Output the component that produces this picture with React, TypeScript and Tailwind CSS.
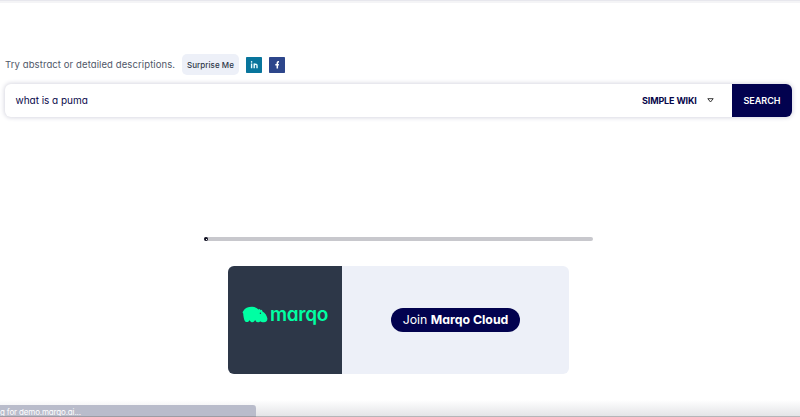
import React from "react";

function PromptRow() {
  return (
    <div className="flex h-[21px] items-center pl-[5px]">
      <p className="w-[177px] whitespace-nowrap text-[9.5px] leading-none tracking-[0.1px] text-[#505868]">
        Try abstract or detailed descriptions.
      </p>
      <button className="h-[21px] w-[57px] whitespace-nowrap rounded-[5px] bg-[#edf0f8] text-[8px] font-medium leading-none tracking-[0.04px] text-[#2d3748]">
        Surprise Me
      </button>
      <svg className="ml-[7px]" width="16" height="16" viewBox="0 0 16 16" aria-label="LinkedIn">
        <rect width="16" height="16" rx=".7" fill="#08759c" />
        <path d="M5.6 6.6V11.3M8.2 11.3V6.6M8.2 8.8C8.2 6.7 11 6.6 11 8.8V11.3" fill="none" stroke="#e8fbff" strokeWidth="1.4" />
        <circle cx="5.6" cy="4.9" r=".8" fill="#e8fbff" />
      </svg>
      <svg className="ml-[6.5px]" width="16" height="16" viewBox="0 0 16 16" aria-label="Facebook">
        <rect width="16" height="16" rx=".7" fill="#2d468b" />
        <path d="M10 4.8H9.4Q8.3 4.8 8.3 6V11.6M6.3 7.7H9.9" fill="none" stroke="white" strokeWidth="1.5" />
      </svg>
    </div>
  );
}

function SearchBar() {
  return (
    <div className="ml-[5px] mt-[9px] flex h-[33px] w-[787px] items-center overflow-hidden rounded-[6px] bg-white shadow-[0_0_4px_1px_#d9d9e2]">
      <span className="mb-[2px] flex-1 whitespace-nowrap pl-[10.5px] text-[10px] leading-none tracking-[-0.03px] text-[#07074a]">what is a puma</span>
      <span className="w-[65px] whitespace-nowrap text-[9px] font-bold leading-none tracking-[-0.13px] text-[#07074a]">SIMPLE WIKI</span>
      <svg className="mr-[18px]" width="7" height="5" viewBox="0 0 7 5">
        <path d="M.8.7H6.2L3.5 4Z" fill="white" stroke="#222" strokeWidth=".9" />
      </svg>
      <button className="h-full w-[60px] bg-[#02024f] text-[9px] font-semibold leading-none text-white">SEARCH</button>
    </div>
  );
}

function MarqoLogo() {
  return (
    <div className="flex h-[20px] items-center">
      <svg width="26" height="17" viewBox="0 0 26 17">
        <path
          d="M.5 6.3L1.3 5.1C3 2 6.2.7 10.2.8c3 0 4.6 1.2 6.4 2.8l1.3-.7.7 1.4 1.3-.5.6 1.6c2.5 1.4 4.7 4.5 4.9 7.2.1 2.2-1.1 3.6-3.4 3.7-1.7.1-2.8-.4-3.8-1.1-.8 1.2-3.4 1.3-4.2.2l-.8-1.3-1.1 1.5c-.9 1-3.1.9-3.7-.3l-.8-1.1-1 1.2c-1.1 1-3.2.8-3.8-.5C1.7 13 1.4 10 1.2 7.6Z"
          fill="#00ffa3"
        />
        <circle cx="18.4" cy="7.3" r=".7" fill="#2d3748" />
      </svg>
      <span className="ml-[2px] text-[19px] font-semibold leading-none tracking-[-0.3px] text-[#00ffa3]">marqo</span>
    </div>
  );
}

export default function App() {
  return (
    <main className="flex h-[417px] w-[800px] flex-col overflow-hidden bg-white font-['Inter','Liberation_Sans',sans-serif] [font-feature-settings:'cv11']">
      <div className="h-[3px] shrink-0 border-b-2 border-[#f4f4f6] bg-[#e7e7ed]" />
      <div className="mt-[51px]">
        <PromptRow />
        <SearchBar />
      </div>
      <div className="ml-[204px] mt-[120px] h-[4px] w-[389px] shrink-0 rounded-full bg-[#c8c8cd]">
        <div className="flex h-[4px] w-[4px] items-center justify-center rounded-full bg-[#111122]">
          <div className="h-px w-px bg-white" />
        </div>
      </div>
      <section className="ml-[228px] mt-[25px] flex h-[108px] w-[341px] shrink-0 overflow-hidden rounded-[6px] bg-[#edf0f8]">
        <div className="flex w-[114px] justify-center bg-[#2d3748] pt-[38px]">
          <MarqoLogo />
        </div>
        <div className="flex flex-1 items-center pl-[49px]">
          <button className="h-[24px] w-[129px] whitespace-nowrap rounded-full bg-[#02024f] text-[12.3px] leading-none text-white">
            Join <strong className="font-bold">Marqo Cloud</strong>
          </button>
        </div>
      </section>
      <footer className="mt-auto flex h-[17px] w-full items-end bg-linear-to-b from-white to-[#e2e3e6]">
        <div className="h-[12px] w-[256px] overflow-hidden whitespace-nowrap rounded-tr-[3px] border-b border-[#9c9ca4] bg-[#b9bccb] pt-[3px] text-[8px] leading-[9px] tracking-[-0.15px] text-white">
          g for demo.marqo.ai...
        </div>
        <div className="h-px flex-1 bg-[#b5b5b8]" />
      </footer>
    </main>
  );
}
